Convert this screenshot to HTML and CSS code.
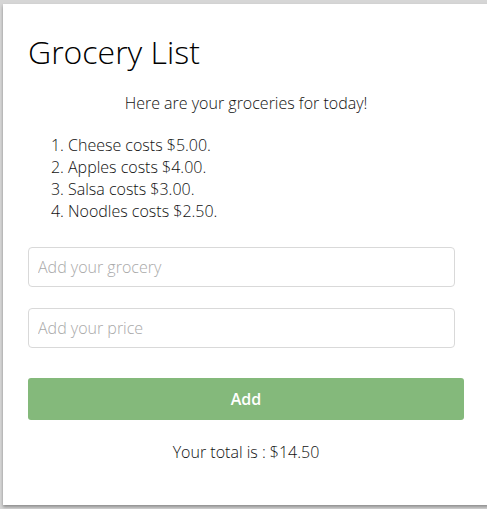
FILE: index.html
```html
<!DOCTYPE html>
<html>
<head>
<meta charset="utf-8">
<link rel="stylesheet" href="styles.css">
</head>
<body>
<div class="card">
  <h1 class="title">Grocery List</h1>
  <p class="intro">Here are your groceries for today!</p>
  <ol class="list">
    <li>Cheese costs $5.00.</li>
    <li>Apples costs $4.00.</li>
    <li>Salsa costs $3.00.</li>
    <li>Noodles costs $2.50.</li>
  </ol>
  <input class="field first" type="text" placeholder="Add your grocery">
  <input class="field second" type="text" placeholder="Add your price">
  <button class="add">Add</button>
  <p class="total">Your total is : $14.50</p>
</div>
</body>
</html>
```

FILE: styles.css
```css
html, body {
  margin: 0;
  height: 100%;
  overflow: hidden;
}
body {
  background: #d6d6d6;
  padding: 4px 0 0 3px;
  box-sizing: border-box;
  font-family: "Open Sans", sans-serif;
  font-weight: 300;
  color: #111;
}
.card {
  width: 486px;
  height: 501px;
  box-sizing: border-box;
  background: #fff;
  box-shadow: 0 2px 3px rgba(0,0,0,0.35);
  padding: 28px 25px 0 25px;
  display: flex;
  flex-direction: column;
  align-items: flex-start;
}
.title {
  margin: 0;
  font-size: 32px;
  font-weight: 300;
  line-height: 40px;
  color: #000;
}
.intro {
  margin: 20px 0 0;
  align-self: stretch;
  text-align: center;
  font-size: 16px;
  line-height: 22px;
}
.list {
  margin: 20px 0 0;
  padding-left: 40px;
  font-size: 16px;
  line-height: 22px;
}
.field {
  width: 427px;
  height: 40px;
  box-sizing: border-box;
  border: 1px solid #d9d9d9;
  border-radius: 4px;
  padding: 0 9px;
  font-family: "Open Sans", sans-serif;
  font-weight: 300;
  font-size: 16px;
  color: #333;
  outline: none;
}
.field::placeholder {
  color: #a9a9a9;
}
.first {
  margin-top: 25px;
}
.second {
  margin-top: 21px;
}
.add {
  margin-top: 30px;
  width: 436px;
  height: 42px;
  border: none;
  border-radius: 3px;
  background: #84b97b;
  color: #fff;
  font-family: "Open Sans", sans-serif;
  font-weight: 600;
  font-size: 16px;
}
.total {
  margin: 21px 0 0;
  align-self: stretch;
  text-align: center;
  font-size: 16px;
  line-height: 22px;
}
```
